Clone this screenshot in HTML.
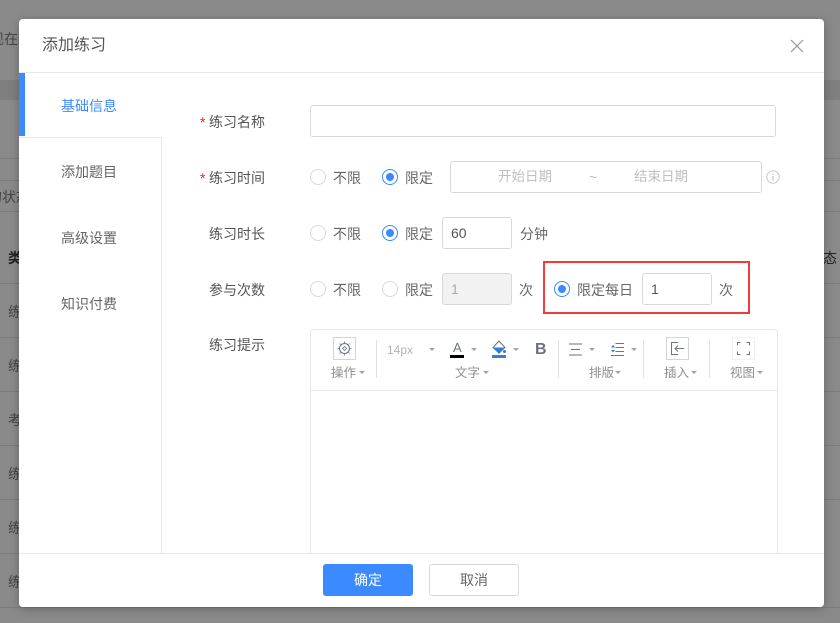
<!DOCTYPE html>
<html><head><meta charset="utf-8">
<style>
html,body{margin:0;padding:0;width:840px;height:623px;overflow:hidden;background:#8a8a8a}
body{position:relative;font-family:"Liberation Sans","Noto Sans CJK SC",sans-serif;font-size:14px;color:#666}
.a{position:absolute}
.t{position:absolute;white-space:nowrap;line-height:18px;margin-top:1px}
.l{position:absolute;height:1px;background:#7c7c7c}
.lab{position:absolute;left:209px;white-space:nowrap;line-height:18px;color:#555;margin-top:1px}
.star{position:absolute;left:200px;color:#f5222d;font-size:14px;line-height:18px;margin-top:-1px}
.r{position:absolute;width:14px;height:14px;border:1px solid #d9d9d9;border-radius:50%;background:#fff}
.r.on{border-color:#3b8aff}
.r.on:after{content:"";position:absolute;left:3px;top:3px;width:8px;height:8px;border-radius:50%;background:#3b8aff}
.inp{position:absolute;box-sizing:border-box;border:1px solid #d9d9d9;border-radius:3px;background:#fff;color:#555;font-size:14px;line-height:30px;padding-left:8px}
.tab{position:absolute;left:61px;color:#666;line-height:18px;margin-top:1px}
.tb{position:absolute;color:#8f8f8f;font-size:12.500px;line-height:14px;white-space:nowrap}
.car{position:absolute;width:0;height:0;border-left:3px solid transparent;border-right:3px solid transparent;border-top:3px solid #a3a3a3}
.sep{position:absolute;width:1px;top:340px;height:38px;background:#e2e2e2}
</style></head>
<body>
<div class="a" style="left:0;top:80px;width:840px;height:20px;background:#7f7f7f"></div>
<div class="t" style="left:-10px;top:29px;color:#444">现在练</div>
<div class="l" style="left:0;top:158px;width:840px"></div>
<div class="l" style="left:0;top:180px;width:840px"></div>
<div class="l" style="left:0;top:211px;width:840px"></div>
<div class="t" style="left:-12px;top:187px;color:#444">的状态</div>
<div class="t" style="left:8px;top:248px;color:#222;font-weight:bold">类</div>
<div class="t" style="left:823px;top:248px;color:#222">态</div>
<div class="l" style="left:0;top:283px;width:840px"></div>
<div class="t" style="left:8px;top:302px;color:#444">练</div>
<div class="l" style="left:0;top:337px;width:840px"></div>
<div class="t" style="left:8px;top:356px;color:#444">练</div>
<div class="l" style="left:0;top:391px;width:840px"></div>
<div class="t" style="left:8px;top:410px;color:#444">考</div>
<div class="l" style="left:0;top:445px;width:840px"></div>
<div class="t" style="left:8px;top:464px;color:#444">练</div>
<div class="l" style="left:0;top:499px;width:840px"></div>
<div class="t" style="left:8px;top:518px;color:#444">练</div>
<div class="l" style="left:0;top:553px;width:19px"></div>
<div class="t" style="left:8px;top:572px;color:#444">练</div>
<div class="l" style="left:0;top:607px;width:840px"></div>

<div class="a" style="left:19px;top:19px;width:805px;height:588px;background:#fff;border-radius:4px;box-shadow:0 2px 10px rgba(0,0,0,.25);overflow:hidden"></div>

<div class="t" style="left:42px;top:35px;font-size:16px;line-height:20px;color:#555">添加练习</div>
<svg class="a" style="left:790px;top:39px" width="14" height="14" viewBox="0 0 14 14"><path d="M1 1L13 13M13 1L1 13" stroke="#999" stroke-width="1.200" fill="none"/></svg>
<div class="a" style="left:19px;top:72px;width:805px;height:1px;background:#e8e8e8"></div>

<div class="a" style="left:19px;top:73px;width:6px;height:63px;background:#3b8aff"></div>
<div class="a" style="left:19px;top:137px;width:142px;height:1px;background:#e8e8e8"></div>
<div class="a" style="left:161px;top:137px;width:1px;height:416px;background:#e8e8e8"></div>
<div class="tab" style="top:96px;color:#3b8aff">基础信息</div>
<div class="tab" style="top:162px">添加题目</div>
<div class="tab" style="top:228px">高级设置</div>
<div class="tab" style="top:294px">知识付费</div>

<div class="star" style="top:114px">*</div>
<div class="lab" style="top:112px">练习名称</div>
<div class="inp" style="left:310px;top:105px;width:466px;height:32px"></div>

<div class="star" style="top:170px">*</div>
<div class="lab" style="top:168px">练习时间</div>
<div class="r" style="left:310px;top:169px"></div><div class="t" style="left:333px;top:168px">不限</div>
<div class="r on" style="left:382px;top:169px"></div><div class="t" style="left:405px;top:168px">限定</div>
<div class="inp" style="left:450px;top:161px;width:312px;height:32px"></div>
<div class="t" style="left:498px;top:167px;color:#bfbfbf;font-size:13.500px">开始日期</div>
<div class="t" style="left:589px;top:167px;color:#bfbfbf">~</div>
<div class="t" style="left:634px;top:167px;color:#bfbfbf;font-size:13.500px">结束日期</div>
<svg class="a" style="left:766px;top:170px" width="14" height="14" viewBox="0 0 14 14"><circle cx="7" cy="7" r="6.200" fill="none" stroke="#c8c8c8"/><path d="M7 3.400v1.400M7 6v4.600" stroke="#c0c0c0" stroke-width="1.200"/></svg>

<div class="lab" style="top:224px">练习时长</div>
<div class="r" style="left:310px;top:225px"></div><div class="t" style="left:333px;top:224px">不限</div>
<div class="r on" style="left:382px;top:225px"></div><div class="t" style="left:405px;top:224px">限定</div>
<div class="inp" style="left:442px;top:217px;width:70px;height:32px">60</div>
<div class="t" style="left:520px;top:224px">分钟</div>

<div class="lab" style="top:280px">参与次数</div>
<div class="r" style="left:310px;top:281px"></div><div class="t" style="left:333px;top:280px">不限</div>
<div class="r" style="left:382px;top:281px"></div><div class="t" style="left:405px;top:280px">限定</div>
<div class="inp" style="left:442px;top:273px;width:70px;height:32px;background:#f2f2f2;color:#aaa">1</div>
<div class="t" style="left:519px;top:280px">次</div>
<div class="a" style="left:543px;top:261px;width:207px;height:53px;box-sizing:border-box;border:2px solid #f23a3a"></div>
<div class="r on" style="left:554px;top:281px"></div><div class="t" style="left:577px;top:280px">限定每日</div>
<div class="inp" style="left:642px;top:273px;width:70px;height:32px">1</div>
<div class="t" style="left:719px;top:280px">次</div>

<div class="lab" style="top:335px">练习提示</div>
<div class="a" style="left:310px;top:329px;width:468px;height:240px;box-sizing:border-box;border:1px solid #e8e8e8;border-radius:4px"></div>
<div class="a" style="left:311px;top:390px;width:466px;height:1px;background:#e8e8e8"></div>

<svg class="a" style="left:333px;top:337px" width="23" height="23" viewBox="0 0 23 23"><rect x=".5" y=".5" width="22" height="22" fill="#fff" stroke="#d4d4d4"/><circle cx="11.500" cy="11.500" r="5" fill="none" stroke="#6b7280"/><path d="M11.500 9.500l2 2-2 2-2-2z" fill="none" stroke="#6b7280" stroke-width=".8"/><path d="M11.500 4.500v1.500M11.500 17v1.500M4.500 11.500H6M17 11.500h1.500M6.500 6.500l1 1M15.500 15.500l1 1M16.500 6.500l-1 1M7.500 15.500l-1 1" stroke="#6b7280" stroke-width=".8"/></svg>
<div class="tb" style="left:331px;top:366px">操作</div><div class="car" style="left:359px;top:371px"></div>
<div class="sep" style="left:376px"></div>
<div class="tb" style="left:387px;top:343px;color:#b3b3b3;font-size:12px">14px</div><div class="car" style="left:429px;top:348px"></div>
<div class="a" style="left:453px;top:341px;font-size:13px;line-height:14px;color:#6b7280">A</div>
<div class="a" style="left:450px;top:355px;width:14px;height:3px;background:#000"></div>
<div class="car" style="left:471px;top:348px"></div>
<svg class="a" style="left:492px;top:340px" width="15" height="15" viewBox="0 0 15 15"><path d="M7 1L1 7.500 7 13l6-5.500z" fill="#fff" stroke="#6b7280"/><path d="M1 7.500h12L7 14z" fill="#2f7fd6"/><circle cx="12.500" cy="11.500" r="1.500" fill="#2f7fd6"/></svg>
<div class="a" style="left:492px;top:355px;width:14px;height:3px;background:#3b7dc9"></div>
<div class="car" style="left:513px;top:348px"></div>
<div class="a" style="left:535px;top:342px;font-size:16px;line-height:16px;font-weight:bold;color:#6b7280">B</div>
<div class="tb" style="left:455px;top:366px">文字</div><div class="car" style="left:483px;top:371px"></div>
<div class="sep" style="left:558px"></div>
<svg class="a" style="left:569px;top:343px" width="13" height="13" viewBox="0 0 13 13"><path d="M0 1h13M2 6.500h9M0 12h13" stroke="#6b7280" fill="none"/></svg>
<div class="car" style="left:589px;top:348px"></div>
<svg class="a" style="left:611px;top:343px" width="13" height="13" viewBox="0 0 13 13"><path d="M4.500 .5h8.500M4.500 4.500h8.500M4.500 8.500h8.500M0 12.500h13" stroke="#6b7280" fill="none"/><path d="M2 2l2 2.500H0zM2 9.500L0 7h4z" fill="#2f7fd6"/></svg>
<div class="car" style="left:631px;top:348px"></div>
<div class="tb" style="left:589px;top:366px">排版</div><div class="car" style="left:615px;top:371px"></div>
<div class="sep" style="left:643px"></div>
<svg class="a" style="left:666px;top:337px" width="23" height="23" viewBox="0 0 23 23"><rect x=".5" y=".5" width="22" height="22" fill="#fff" stroke="#d4d4d4"/><path d="M12 5.500H5.500v12H12M18 11.500H9M12 8.500l-3 3 3 3" stroke="#6b7280" fill="none"/></svg>
<div class="tb" style="left:664px;top:366px">插入</div><div class="car" style="left:691px;top:371px"></div>
<div class="sep" style="left:709px"></div>
<svg class="a" style="left:732px;top:337px" width="23" height="23" viewBox="0 0 23 23"><rect x=".5" y=".5" width="22" height="22" fill="#fff" stroke="#f2f2f2"/><path d="M5.500 8.500v-3h3M14.500 5.500h3v3M17.500 14.500v3h-3M8.500 17.500h-3v-3" stroke="#6b7280" fill="none"/></svg>
<div class="tb" style="left:730px;top:366px">视图</div><div class="car" style="left:757px;top:371px"></div>

<div class="a" style="left:19px;top:553px;width:805px;height:54px;background:#fff;border-radius:0 0 4px 4px"></div>
<div class="a" style="left:19px;top:553px;width:805px;height:1px;background:#e8e8e8"></div>
<div class="a" style="left:323px;top:564px;width:90px;height:32px;background:#3b8aff;border-radius:3px;color:#fff;text-align:center;line-height:32px;font-size:14px">确定</div>
<div class="a" style="left:429px;top:564px;width:90px;height:32px;box-sizing:border-box;border:1px solid #d9d9d9;border-radius:3px;color:#666;text-align:center;line-height:30px;font-size:14px;background:#fff">取消</div>
</body></html>
